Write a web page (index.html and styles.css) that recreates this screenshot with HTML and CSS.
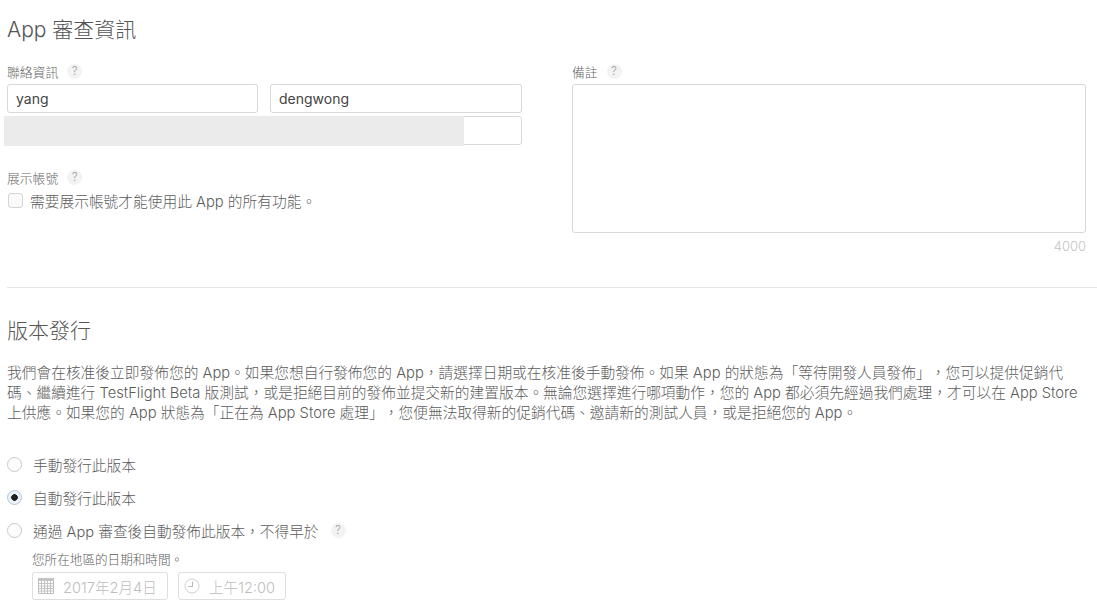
FILE: index.html
```html
<!DOCTYPE html>
<html lang="zh-Hant">
<head>
<meta charset="utf-8">
<title>App 審查資訊</title>
<link rel="stylesheet" href="styles.css">
</head>
<body>
<main class="page">
  <section class="review">
    <h2 class="heading">App 審查資訊</h2>
    <div class="review-grid">
      <div class="col">
        <div class="label">聯絡資訊 <span class="help">?</span></div>
        <div class="name-row">
          <div class="field">yang</div>
          <div class="field">dengwong</div>
        </div>
        <div class="field field-masked"><span class="mask"></span></div>
        <div class="label label-demo">展示帳號 <span class="help">?</span></div>
        <div class="check-row"><span class="checkbox"></span><span>需要展示帳號才能使用此 App 的所有功能。</span></div>
      </div>
      <div class="col">
        <div class="label">備註 <span class="help">?</span></div>
        <div class="textarea"></div>
        <div class="counter">4000</div>
      </div>
    </div>
  </section>
  <hr class="rule">
  <section class="release">
    <h2 class="heading">版本發行</h2>
    <p class="copy">我們會在核准後立即發佈您的 App。如果您想自行發佈您的 App，請選擇日期或在核准後手動發佈。如果 App 的狀態為「等待開發人員發佈」，您可以提供促銷代<br>碼、繼續進行 TestFlight Beta 版測試，或是拒絕目前的發佈並提交新的建置版本。無論您選擇進行哪項動作，您的 App 都必須先經過我們處理，才可以在 App Store<br>上供應。如果您的 App 狀態為「正在為 App Store 處理」，您便無法取得新的促銷代碼、邀請新的測試人員，或是拒絕您的 App。</p>
    <div class="radio-row"><span class="radio"></span><span>手動發行此版本</span></div>
    <div class="radio-row"><span class="radio radio-on"></span><span>自動發行此版本</span></div>
    <div class="radio-row"><span class="radio"></span><span>通過 App 審查後自動發佈此版本，不得早於</span><span class="help help-wide">?</span></div>
    <div class="schedule">
      <div class="hint">您所在地區的日期和時間。</div>
      <div class="pickers">
        <div class="picker picker-date">
          <svg class="icon" width="16" height="16" viewBox="0 0 16 16" aria-hidden="true"><path d="M.5 .5h15v15H.5z" fill="none" stroke="#bdbdbd"/><path d="M0 0h16v3H0z" fill="#c4c4c4"/><path d="M.5 5.5h15M.5 8h15M.5 10.5h15M.5 13h15M3.5 3v12M6.5 3v12M9.5 3v12M12.5 3v12" fill="none" stroke="#c4c4c4"/></svg>
          <span>2017年2月4日</span>
        </div>
        <div class="picker picker-time">
          <svg class="icon" width="16" height="16" viewBox="0 0 16 16" aria-hidden="true"><circle cx="8" cy="8" r="7" fill="none" stroke="#cfcfcf"/><path d="M8.5 3.5v5h-4" fill="none" stroke="#b5b5b5"/></svg>
          <span>上午12:00</span>
        </div>
      </div>
    </div>
  </section>
</main>
</body>
</html>
```
FILE: styles.css
```css
* { box-sizing: border-box; }
html, body { margin: 0; padding: 0; background: #fff; }
body {
  height: 608px;
  overflow: hidden;
  color: #5c5c5c;
  font-family: "Inter", "Noto Sans CJK TC", sans-serif;
  font-weight: 300;
  font-size: 14.72px;
  text-spacing-trim: space-all;
}
.page { padding-left: 7px; }
.heading {
  margin: 0;
  font-size: 21px;
  line-height: 28px;
  font-weight: 300;
  color: #555;
}
.review { padding-top: 16px; }
.review-grid {
  display: grid;
  grid-template-columns: 515px 514px;
  column-gap: 50px;
  margin-top: 19px;
}
.label {
  display: flex;
  align-items: center;
  gap: 9px;
  height: 16px;
  font-size: 12.8px;
  color: #666;
}
.help {
  display: inline-flex;
  align-items: center;
  justify-content: center;
  width: 15px;
  height: 15px;
  border-radius: 50%;
  background: #f3f3f3;
  color: #999;
  font-size: 11px;
}
.help-wide { margin-left: 12px; }
.name-row {
  display: grid;
  grid-template-columns: 251px 252px;
  column-gap: 12px;
  margin-top: 5px;
}
.field {
  height: 29px;
  border: 1px solid #d8d8d8;
  border-radius: 3px;
  padding-left: 8px;
  line-height: 28px;
  color: #444;
  font-size: 14px;
  font-weight: 400;
}
.field-masked { margin-top: 3px; position: relative; }
.mask {
  position: absolute;
  left: -4px;
  top: -1px;
  width: 460px;
  height: 30px;
  background: #ebebeb;
}
.label-demo { margin-top: 24px; }
.check-row {
  display: flex;
  align-items: center;
  gap: 7px;
  margin-top: 7px;
  height: 16px;
}
.checkbox {
  width: 15px;
  height: 15px;
  margin-left: 1px;
  border: 1px solid #d5d5d5;
  border-radius: 3px;
  background: #fafafa;
}
.textarea {
  height: 149px;
  margin-top: 5px;
  border: 1px solid #d8d8d8;
  border-radius: 3px;
}
.counter {
  margin-top: 5px;
  text-align: right;
  font-size: 13px;
  line-height: 17px;
  color: #c4c4c4;
}
.rule {
  margin: 32px 0 0;
  border: 0;
  border-top: 1px solid #e6e6e6;
}
.release { padding-top: 29px; }
.copy {
  margin: 18px 0 0;
  line-height: 20px;
  white-space: nowrap;
}
.radio-row {
  display: flex;
  align-items: center;
  height: 20px;
  margin-top: 13px;
  font-size: 14.7px;
}
.copy + .radio-row { margin-top: 31px; }
.radio {
  flex: none;
  width: 15px;
  height: 15px;
  margin-right: 11px;
  border: 1px solid #c8c8c8;
  border-radius: 50%;
  background: #fdfdfd;
}
.radio-on {
  border-color: #b6c8dc;
  background: radial-gradient(circle, #222 0 3px, #eaf1f9 3.6px);
}
.schedule { margin-left: 25px; margin-top: 12px; }
.hint { font-size: 12.6px; line-height: 16px; }
.pickers { display: flex; gap: 10px; margin-top: 4px; }
.picker {
  display: flex;
  align-items: center;
  height: 28px;
  padding-left: 5px;
  border: 1px solid #dedede;
  border-radius: 3px;
  color: #bdbdbd;
  font-size: 14.6px;
  gap: 9px;
}
.picker-date { width: 136px; }
.picker-time { width: 108px; }
```
